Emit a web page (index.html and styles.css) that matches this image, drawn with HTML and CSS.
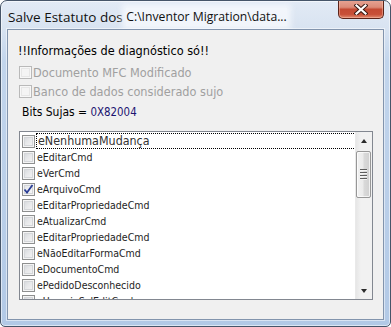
FILE: index.html
```html
<!DOCTYPE html>
<html>
<head>
<meta charset="utf-8">
<link rel="stylesheet" href="styles.css">
</head>
<body>
<div class="win">
  <div class="titlebar">
    <span class="title">Salve Estatuto dos </span><span class="path">C:\Inventor Migration\data...</span>
    <div class="close">
      <svg width="14" height="11" viewBox="0 0 14 11">
        <path d="M2.5 1.5 L11.5 9.5 M11.5 1.5 L2.5 9.5" stroke="#3b1a14" stroke-width="4.2" stroke-linecap="square" fill="none"/>
        <path d="M2.5 1.5 L11.5 9.5 M11.5 1.5 L2.5 9.5" stroke="#ffffff" stroke-width="2.2" stroke-linecap="square" fill="none"/>
      </svg>
    </div>
  </div>
  <div class="client">
    <div class="info">!!Informações de diagnóstico só!!</div>
    <div class="opt opt1"><span class="cb dis"></span><span class="dlabel">Documento MFC Modificado</span></div>
    <div class="opt opt2"><span class="cb dis"></span><span class="dlabel">Banco de dados considerado sujo</span></div>
    <div class="bits">Bits Sujas = <span class="hex">0X82004</span></div>
    <div class="list">
      <div class="items">
        <div class="item"><span class="cb"></span><span class="lbl big focus">eNenhumaMudança</span></div>
        <div class="item"><span class="cb"></span><span class="lbl">eEditarCmd</span></div>
        <div class="item"><span class="cb"></span><span class="lbl">eVerCmd</span></div>
        <div class="item"><span class="cb checked"><svg width="11" height="11" viewBox="0 0 11 11"><path d="M1.5 5.5 L4 8.5 L9.5 1" stroke="#2a3d96" stroke-width="1.8" fill="none"/></svg></span><span class="lbl">eArquivoCmd</span></div>
        <div class="item"><span class="cb"></span><span class="lbl">eEditarPropriedadeCmd</span></div>
        <div class="item"><span class="cb"></span><span class="lbl">eAtualizarCmd</span></div>
        <div class="item"><span class="cb"></span><span class="lbl">eEditarPropriedadeCmd</span></div>
        <div class="item"><span class="cb"></span><span class="lbl">eNãoEditarFormaCmd</span></div>
        <div class="item"><span class="cb"></span><span class="lbl">eDocumentoCmd</span></div>
        <div class="item"><span class="cb"></span><span class="lbl">ePedidoDesconhecido</span></div>
        <div class="item"><span class="cb"></span><span class="lbl">eUsuarioSolEditCmd</span></div>
      </div>
      <div class="sb">
        <div class="sbbtn"><span class="arr up"></span></div>
        <div class="track">
          <div class="thumb"><span class="grip"></span><span class="grip"></span><span class="grip"></span><span class="grip"></span></div>
        </div>
        <div class="sbbtn"><span class="arr down"></span></div>
      </div>
    </div>
  </div>
</div>
</body>
</html>
```

FILE: styles.css
```css
html, body {
  margin: 0;
  padding: 0;
  background: #ffffff;
}

.win {
  width: 391px;
  height: 327px;
  box-sizing: border-box;
  border: 1px solid #465569;
  border-radius: 7px 7px 5px 5px;
  background: linear-gradient(180deg, #e2eaf5 0px, #d8e3f1 28px, #c2d5ec 60px, #b2c9e6 100%);
  box-shadow: inset 0 0 0 1px rgba(255, 255, 255, 0.55);
  display: flex;
  flex-direction: column;
  overflow: hidden;
}

.titlebar {
  height: 28px;
  display: flex;
  align-items: flex-start;
  padding-left: 7px;
  flex: none;
}

.title {
  font-family: "Open Sans", "DejaVu Sans", sans-serif;
  font-size: 13.5px;
  line-height: 18px;
  margin-top: 7px;
  color: #111;
  white-space: pre;
}

.path {
  font-family: "Open Sans", "DejaVu Sans", sans-serif;
  font-size: 12.2px;
  line-height: 18px;
  margin-top: 7px;
  color: #101010;
  background: rgba(246, 249, 253, 0.8);
  box-shadow: 0 0 6px 4px rgba(246, 249, 253, 0.8);
  white-space: pre;
}

.close {
  margin-left: auto;
  margin-right: 6px;
  width: 46px;
  height: 19px;
  box-sizing: border-box;
  margin-top: -1px;
  border: 1px solid #5b2319;
  border-top: none;
  border-radius: 0 0 5px 5px;
  background: linear-gradient(180deg, #e7a595 0%, #dc8b78 40%, #c44a33 52%, #c85038 80%, #e08a70 100%);
  box-shadow: inset 0 0 0 1px rgba(255, 200, 180, 0.45);
  display: flex;
  align-items: center;
  justify-content: center;
}

.close svg {
  display: block;
  margin-top: 1px;
}

.client {
  flex: 1;
  margin: 0 6px 6px 6px;
  border: 1px solid #8294ad;
  background: #f0f0f0;
  box-shadow: 0 0 0 1px rgba(255, 255, 255, 0.5);
  display: flex;
  flex-direction: column;
  padding-left: 10px;
  font-family: "DejaVu Sans Condensed", "DejaVu Sans", sans-serif;
  font-stretch: condensed;
  color: #000;
}

.info {
  margin-top: 13px;
  height: 16px;
  line-height: 16px;
  font-size: 12.6px;
}

.opt {
  display: flex;
  align-items: center;
  height: 16px;
  margin-left: 1px;
  font-size: 12.6px;
}

.opt1 { margin-top: 5px; }
.opt2 { margin-top: 3px; }

.dlabel {
  color: #a0a0a0;
  margin-left: 1px;
}

.bits {
  margin-top: 5px;
  height: 16px;
  line-height: 16px;
  margin-left: 4px;
  font-size: 12px;
}

.hex {
  color: #1c1470;
  font-size: 11.4px;
}

.cb {
  width: 13px;
  height: 13px;
  box-sizing: border-box;
  border: 1px solid #8e8f8f;
  background: linear-gradient(135deg, #cfd2d6 0%, #e6e7e9 45%, #f7f7f7 100%);
  box-shadow: inset 0 0 0 1px #f4f4f4, inset 0 0 0 2px #d4d6d9;
  flex: none;
  display: flex;
  align-items: center;
  justify-content: center;
}

.cb.dis {
  border-color: #b9b9b9;
  background: #f4f4f4;
  box-shadow: inset 0 0 0 1px #f7f7f7, inset 0 0 0 2px #e6e6e6;
}

.cb.checked {
  background: linear-gradient(135deg, #dfe2e6 0%, #eeeff1 50%, #fafafa 100%);
}

.cb svg {
  display: block;
}

.list {
  margin-top: 11px;
  margin-left: 1px;
  width: 354px;
  height: 169px;
  box-sizing: border-box;
  border: 1px solid #828790;
  background: #ffffff;
  display: flex;
}

.items {
  flex: 1;
  overflow: hidden;
  padding-top: 1px;
  padding-left: 2px;
}

.item {
  height: 16px;
  display: flex;
  align-items: center;
}

.lbl {
  margin-left: 2px;
  font-size: 10.5px;
  color: #1e1e1e;
  white-space: nowrap;
}

.lbl.big {
  font-size: 12.4px;
  color: #333;
}

.lbl.focus {
  flex: 1;
  margin-left: 2px;
  padding-left: 1px;
  height: 14px;
  line-height: 14px;
  outline: 1px dotted #000;
  outline-offset: 0px;
}

.sb {
  width: 17px;
  flex: none;
  display: flex;
  flex-direction: column;
  background: linear-gradient(90deg, #e6e6e6 0%, #f1f1f1 30%, #f1f1f1 100%);
  border-left: 1px solid #e9e9e9;
  box-sizing: border-box;
}

.sbbtn {
  height: 17px;
  flex: none;
  display: flex;
  align-items: center;
  justify-content: center;
}

.arr {
  width: 0;
  height: 0;
  border-left: 3.5px solid transparent;
  border-right: 3.5px solid transparent;
}

.arr.up {
  border-bottom: 4px solid #2b2b2b;
}

.arr.down {
  border-top: 4px solid #2b2b2b;
}

.track {
  flex: 1;
  padding-top: 2px;
}

.thumb {
  width: 15px;
  height: 47px;
  margin-left: 0px;
  box-sizing: border-box;
  border: 1px solid #979797;
  border-radius: 2px;
  background: linear-gradient(90deg, #f2f2f2 0%, #ebebeb 45%, #d9d9d9 55%, #d0d0d0 100%);
  box-shadow: inset 0 0 0 1px rgba(255, 255, 255, 0.7);
  display: flex;
  flex-direction: column;
  align-items: center;
  justify-content: center;
  gap: 1px;
}

.grip {
  width: 7px;
  height: 1px;
  background: #5e5e5e;
  border-bottom: 1px solid #f4f4f4;
}
```
